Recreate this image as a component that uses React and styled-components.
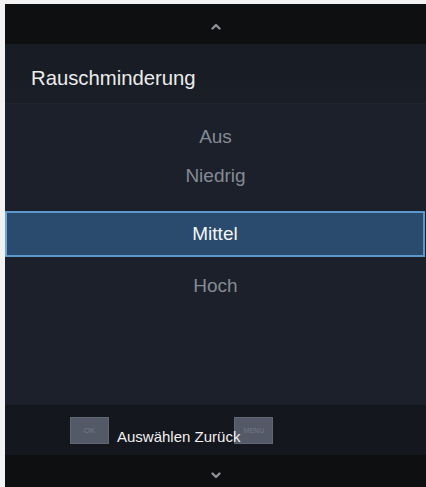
import React from "react";
import styled, { createGlobalStyle } from "styled-components";

const Global = createGlobalStyle`
  html, body { margin: 0; padding: 0; background: #f4f4f4; }
  body { font-family: "Liberation Sans", Arial, sans-serif; }
`;

const Frame = styled.div`
  width: 426px;
  height: 487px;
  box-sizing: border-box;
  padding: 4px 0 0 5px;
  background: #f2f2f2;
  overflow: hidden;
`;

const Screen = styled.div`
  display: flex;
  flex-direction: column;
  height: 483px;
  background: #1b202a;
`;

const ArrowBar = styled.div`
  height: ${(p) => p.$h}px;
  background: #0e0f11;
  display: flex;
  align-items: center;
  justify-content: center;
  padding-left: ${(p) => p.$shift || 0}px;
  padding-top: ${(p) => p.$top || 0}px;
  box-sizing: border-box;
`;

const Header = styled.div`
  height: 60px;
  box-sizing: border-box;
  background: linear-gradient(#171b23, #1a1e27);
  border-bottom: 1px solid #20252f;
  display: flex;
  align-items: center;
  padding: 10px 0 0 26px;
  color: #ececec;
  font-size: 20.3px;
`;

const List = styled.div`
  flex: 1;
  display: flex;
  flex-direction: column;
  padding-top: 13px;
`;

const Item = styled.div`
  height: ${(p) => (p.$selected ? 42 : 39)}px;
  display: flex;
  align-items: center;
  justify-content: center;
  font-size: 19px;
  color: ${(p) => (p.$selected ? "#f4f6f8" : "#858b95")};
  background: ${(p) => (p.$selected ? "#2a4a6e" : "transparent")};
  border: ${(p) => (p.$selected ? "2px solid #5b98cc" : "none")};
  border-left-color: #6aa6d6;
  margin: ${(p) => (p.$selected ? "16px 1px 9px 0" : "0")};
`;

const Footer = styled.div`
  height: 50px;
  background: #14171d;
  display: flex;
  align-items: center;
  padding-left: 65px;
`;

const Key = styled.div`
  width: 39px;
  height: 27px;
  box-sizing: border-box;
  background: #535966;
  border: 1px solid #5f6572;
  display: flex;
  align-items: center;
  justify-content: center;
  font-size: ${(p) => (p.$small ? 7 : 8)}px;
  color: #737984;
  margin-left: ${(p) => p.$ml || 0}px;
`;

const Hint = styled.span`
  position: relative;
  z-index: 1;
  color: #f2f2f2;
  font-size: 15px;
  margin-left: 8px;
  padding-top: 13px;
`;

const Chevron = ({ up }) => (
  <svg width="10" height="7" viewBox="0 0 10 7">
    <polyline
      points={up ? "1.5,5.5 5,2 8.5,5.5" : "1.5,1.5 5,5 8.5,1.5"}
      fill="none"
      stroke="#8d8f93"
      strokeWidth="2.4"
      strokeLinecap="round"
      strokeLinejoin="round"
    />
  </svg>
);

export default function App() {
  const items = ["Aus", "Niedrig", "Mittel", "Hoch"];
  return (
    <>
      <Global />
      <Frame>
        <Screen>
          <ArrowBar $h={40} $shift={-7} $top={4}>
            <Chevron up />
          </ArrowBar>
          <Header>Rauschminderung</Header>
          <List>
            {items.map((t) => (
              <Item key={t} $selected={t === "Mittel"}>
                {t}
              </Item>
            ))}
          </List>
          <Footer>
            <Key>OK</Key>
            <Hint>Auswählen Zurück</Hint>
            <Key $small $ml={-6}>MENU</Key>
          </Footer>
          <ArrowBar $h={32} $shift={-7} $top={8}>
            <Chevron />
          </ArrowBar>
        </Screen>
      </Frame>
    </>
  );
}
